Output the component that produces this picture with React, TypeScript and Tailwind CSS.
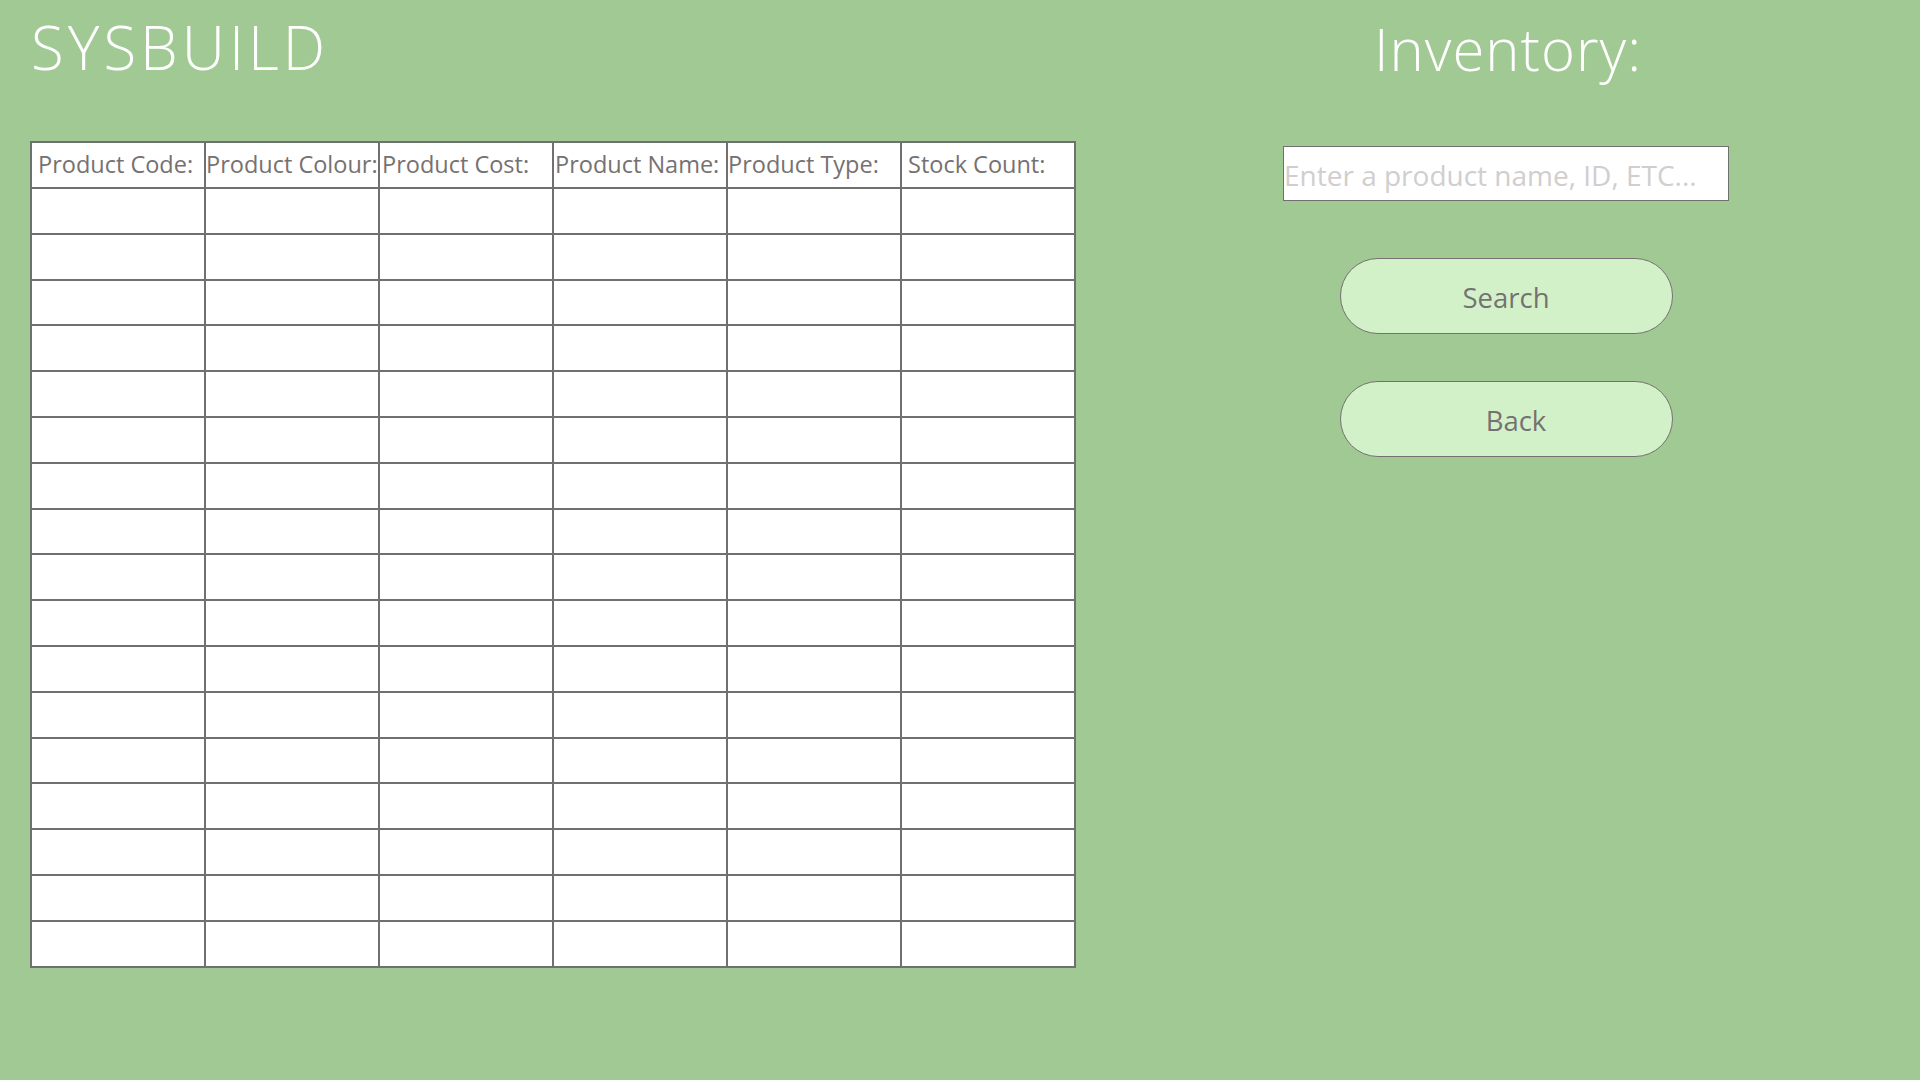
const columns = [
  { label: "Product Code:", pad: "pl-[6px]" },
  { label: "Product Colour:", pad: "pl-0" },
  { label: "Product Cost:", pad: "pl-[2px]" },
  { label: "Product Name:", pad: "pl-[1px]" },
  { label: "Product Type:", pad: "pl-0" },
  { label: "Stock Count:", pad: "pl-[6px]" },
];

const rows = Array.from({ length: 17 }, (_, i) => i);

export default function App() {
  return (
    <div className="w-[1920px] h-[1080px] bg-[#a1c993] overflow-hidden font-['Open_Sans',sans-serif] flex">
      {/* left side: title + table */}
      <div className="flex flex-col pl-[30px] w-[1200px]">
        <h1 className="text-white font-light text-[60px] leading-none tracking-[4px] pt-[17px] h-[141px] pl-[1px]">
          SYSBUILD
        </h1>
        <table className="border-collapse table-fixed w-[1044px] bg-white">
          <thead>
            <tr className="h-[46px]">
              {columns.map((c) => (
                <th
                  key={c.label}
                  className={`border-2 border-[#707070] w-[174px] text-left font-normal text-[23.5px] text-[#767171] whitespace-nowrap overflow-hidden ${c.pad}`}
                >
                  {c.label}
                </th>
              ))}
            </tr>
          </thead>
          <tbody>
            {rows.map((r) => (
              <tr key={r} className="h-[45.8px]">
                {columns.map((c) => (
                  <td key={c.label} className="border-2 border-[#707070]" />
                ))}
              </tr>
            ))}
          </tbody>
        </table>
      </div>

      {/* right side: search panel */}
      <div className="flex flex-col items-center ml-[83px] w-[446px]">
        <h2 className="text-white font-light text-[58px] leading-none tracking-[1px] pt-[20px] h-[146px] pl-[4px]">
          Inventory:
        </h2>
        <input
          type="text"
          placeholder="Enter a product name, ID, ETC..."
          className="w-[446px] h-[55px] bg-white border border-[#707070] text-[28px] text-[#767171] placeholder:text-[#d0cece] outline-none px-0 pt-[2px]"
        />
        <button className="mt-[57px] w-[333px] h-[76px] rounded-full bg-[#d3f1c9] border border-[#767171] text-[#767171] text-[27.5px] pt-[4px]">
          Search
        </button>
        <button className="mt-[47px] w-[333px] h-[76px] rounded-full bg-[#d3f1c9] border border-[#767171] text-[#767171] text-[27.5px] pl-[20px] pt-[4px]">
          Back
        </button>
      </div>
    </div>
  );
}
